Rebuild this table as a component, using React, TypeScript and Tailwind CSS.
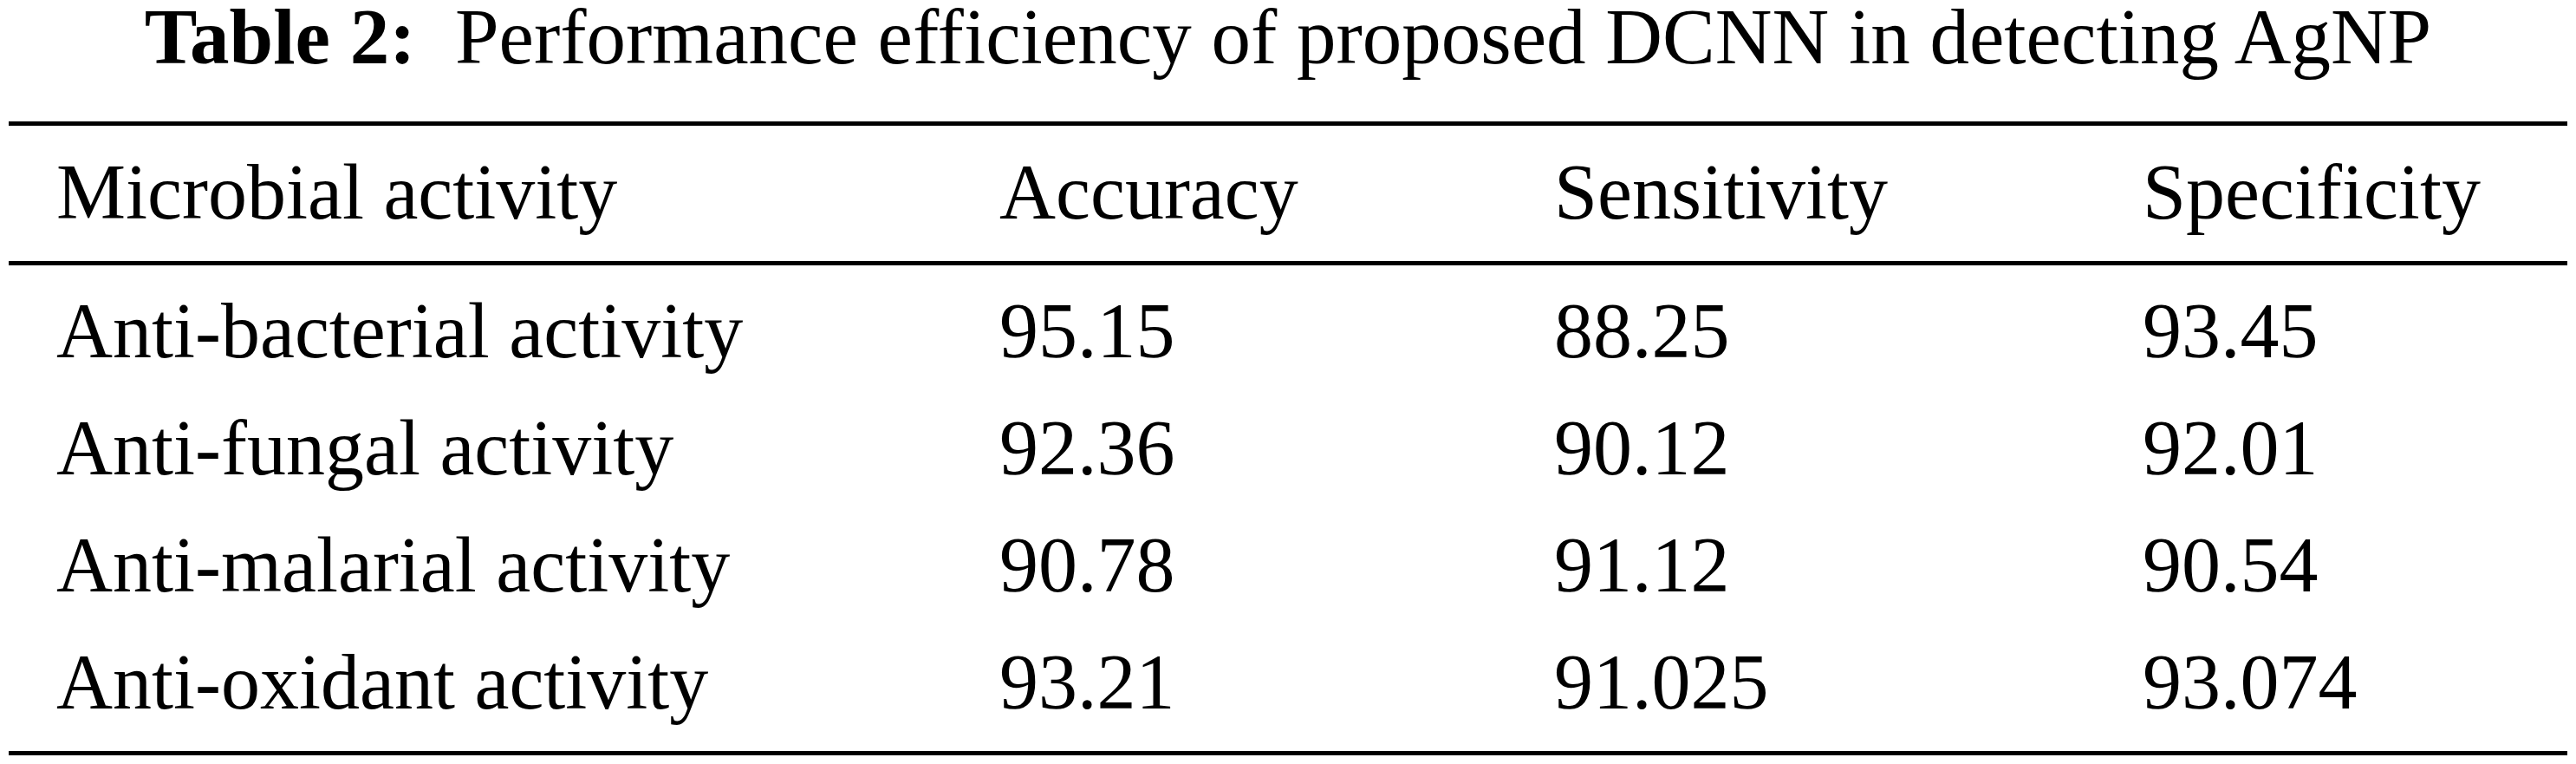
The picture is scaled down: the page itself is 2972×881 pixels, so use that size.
import React from "react";

const header = ["Microbial activity", "Accuracy", "Sensitivity", "Specificity"];
const rows = [
  ["Anti-bacterial activity", "95.15", "88.25", "93.45"],
  ["Anti-fungal activity", "92.36", "90.12", "92.01"],
  ["Anti-malarial activity", "90.78", "91.12", "90.54"],
  ["Anti-oxidant activity", "93.21", "91.025", "93.074"],
];

function Row({ cells }: { cells: string[] }) {
  return (
    <div className="grid grid-cols-[1088px_640px_679px_1fr] h-[135px] pl-[55px] text-[90px] leading-[135px] whitespace-nowrap">
      {cells.map((c, i) => (
        <div key={i}>{c}</div>
      ))}
    </div>
  );
}

export default function App() {
  return (
    <div className="w-[2972px] h-[881px] bg-white text-black font-['Liberation_Serif','Times_New_Roman',serif]">
      <div className="text-center text-[91px] leading-[86px] whitespace-nowrap">
        <span className="font-bold">Table 2:</span>
        <span className="ml-[0.5em]">Performance efficiency of proposed DCNN in detecting AgNP</span>
      </div>
      <div className="mx-[10px] mt-[54px] border-t-[5px] border-b-[5px] border-black">
        <div className="pt-[9px] pb-[12px] border-b-[5px] border-black">
          <Row cells={header} />
        </div>
        <div className="pt-[8px] pb-[12px]">
          {rows.map((r, i) => (
            <Row key={i} cells={r} />
          ))}
        </div>
      </div>
    </div>
  );
}
